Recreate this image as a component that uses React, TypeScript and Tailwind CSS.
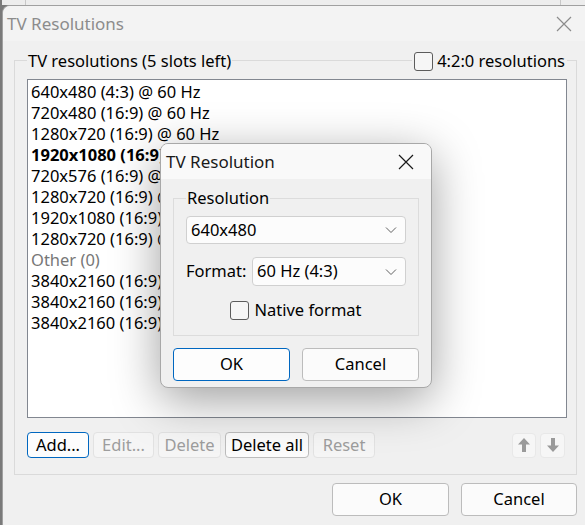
import React from 'react';

const font = { fontFamily: '"Noto Sans", "Open Sans", sans-serif' };

const items: { text: string; bold?: boolean; muted?: boolean }[] = [
    { text: '640x480 (4:3) @ 60 Hz' },
    { text: '720x480 (16:9) @ 60 Hz' },
    { text: '1280x720 (16:9) @ 60 Hz' },
    { text: '1920x1080 (16:9) @ 60 Hz', bold: true },
    { text: '720x576 (16:9) @ 50 Hz' },
    { text: '1280x720 (16:9) @ 50 Hz' },
    { text: '1920x1080 (16:9) @ 50 Hz' },
    { text: '1280x720 (16:9) @ 24 Hz' },
    { text: 'Other (0)', muted: true },
    { text: '3840x2160 (16:9) @ 60 Hz' },
    { text: '3840x2160 (16:9) @ 50 Hz' },
    { text: '3840x2160 (16:9) @ 30 Hz' },
];

const CloseIcon = ({ color }: { color: string }) => (
    <svg width="16" height="16" viewBox="0 0 16 16" fill="none" stroke={color} strokeWidth="1.2">
        <path d="M1 1 L15 15 M15 1 L1 15" />
    </svg>
);

const Chevron = () => (
    <svg width="12" height="8" viewBox="0 0 12 8" fill="none" stroke="#606060" strokeWidth="1">
        <path d="M1 1.5 L6 6.5 L11 1.5" />
    </svg>
);

const Arrow = ({ down }: { down?: boolean }) => (
    <svg width="12" height="14" viewBox="0 0 12 14" fill="#9a9a9a" className={down ? 'rotate-180' : ''}>
        <path d="M6 0 L12 6.5 L8 6.5 L8 14 L4 14 L4 6.5 L0 6.5 Z" />
    </svg>
);

const Checkbox = () => (
    <span className="inline-block w-[19px] h-[19px] rounded-[3px] border border-[#5c5c5c] bg-[#f6f6f6]" />
);

const Button = ({
    label,
    className = '',
    variant = 'normal',
}: {
    label: string;
    className?: string;
    variant?: 'normal' | 'default' | 'disabled';
}) => {
    const look =
        variant === 'default'
            ? 'border-[#0067c0] text-black bg-[#fdfdfd]'
            : variant === 'disabled'
              ? 'border-[#e2e2e2] text-[#9d9d9d] bg-[#f5f5f5]'
              : 'border-[#bcbcbc] text-black bg-[#fbfbfb]';
    return (
        <button className={`flex items-center justify-center rounded-[4px] border text-[16.5px] ${look} ${className}`}>
            {label}
        </button>
    );
};

const ResolutionDialog = () => (
    <div className="absolute left-[160px] top-[143px] w-[272px] h-[245px] rounded-[8px] border border-[#a8a8a8] bg-[#f0f0f0] overflow-hidden shadow-[0_12px_48px_rgba(0,0,0,0.38)]">
        <div className="h-[35px] bg-[#f9f9f9] flex items-center">
            <span className="pl-[5px] text-[17px] text-[#1a1a1a]">TV Resolution</span>
            <span className="ml-auto w-[46px] mr-[2px] flex justify-center">
                <CloseIcon color="#1a1a1a" />
            </span>
        </div>

        <div className="px-[12px] pt-[19px]">
            <div className="border border-[#dcdcdc] px-[12px] pb-[12px]">
                <div className="-mt-[12px] flex">
                    <span className="bg-[#f0f0f0] px-[1px] text-[16.5px] leading-[22px] text-black">Resolution</span>
                </div>
                <div className="mt-[7px] h-[28px] rounded-[4px] border border-[#d0d0d0] bg-[#fcfcfc] flex items-center pl-[4px] pr-[8px] text-[16.5px]">
                    <span>640x480</span>
                    <span className="ml-auto">
                        <Chevron />
                    </span>
                </div>
                <div className="mt-[13px] flex items-center">
                    <span className="text-[16.5px] w-[66px]">Format:</span>
                    <div className="flex-1 h-[29px] rounded-[4px] border border-[#d0d0d0] bg-[#fcfcfc] flex items-center pl-[4px] pr-[8px] text-[16.5px]">
                        <span>60 Hz (4:3)</span>
                        <span className="ml-auto">
                            <Chevron />
                        </span>
                    </div>
                </div>
                <div className="mt-[12px] flex items-center justify-center gap-[5px] text-[16.5px]">
                    <Checkbox />
                    <span>Native format</span>
                </div>
            </div>

            <div className="mt-[12px] flex gap-[12px]">
                <Button label="OK" variant="default" className="w-[117px] h-[33px]" />
                <Button label="Cancel" className="w-[117px] h-[33px]" />
            </div>
        </div>
    </div>
);

const App = () => {
    return (
        <div className="relative w-[585px] h-[525px] overflow-hidden bg-[#7a7a7a]" style={font}>
            {/* desktop strip above the window */}
            <div className="h-[5px] ml-[2px] bg-[#ededed] flex">
                <div className="ml-[23px] w-px bg-[#c8c8c8]" />
                <div className="ml-auto mr-[24px] w-px bg-[#c8c8c8]" />
            </div>

            <div className="ml-[2px] w-[590px] h-[530px] rounded-tl-[8px] bg-[#f0f0f0] border-l border-t border-[#a0a0a0] overflow-hidden">
                <div className="h-[35px] bg-[#f3f3f3] flex items-center">
                    <span className="pl-[4px] text-[17px] text-[#8c8c8c]">TV Resolutions</span>
                    <span className="ml-auto w-[40px] mr-[8px] flex justify-center">
                        <CloseIcon color="#8c8c8c" />
                    </span>
                </div>

                <div className="pl-[11px] w-[583px] pr-[9px]">
                    <div className="mt-[19px] h-[415px] border border-[#dadada] pl-[12px] pr-[9px] flex flex-col">
                        <div className="-mt-[11px] h-[22px] flex items-center">
                            <span className="bg-[#f0f0f0] px-[1px] text-[16.5px] text-black">TV resolutions (5 slots left)</span>
                            <span className="ml-auto bg-[#f0f0f0] pl-[2px] pr-[2px] flex items-center gap-[4px] text-[16.5px]">
                                <Checkbox />
                                4:2:0 resolutions
                            </span>
                        </div>

                        <div className="mt-[7px] h-[339px] bg-white border border-[#828790] pt-[1px] pl-[3px]">
                            {items.map((it, i) => (
                                <div
                                    key={i}
                                    className={`h-[21px] leading-[21px] text-[16.5px] whitespace-nowrap ${it.bold ? 'font-bold text-black' : it.muted ? 'text-[#777]' : 'text-black'}`}
                                >
                                    {it.text}
                                </div>
                            ))}
                        </div>

                        <div className="mt-[14px] flex items-center gap-[4px]">
                            <Button label="Add..." variant="default" className="w-[62px] h-[26px]" />
                            <Button label="Edit..." variant="disabled" className="w-[61px] h-[26px]" />
                            <Button label="Delete" variant="disabled" className="w-[63px] h-[26px]" />
                            <Button label="Delete all" className="w-[84px] h-[26px] bg-[#ececec]" />
                            <Button label="Reset" variant="disabled" className="w-[62px] h-[26px]" />
                            <div className="ml-auto flex gap-[4px] mr-[2px]">
                                <span className="w-[24px] h-[25px] rounded-[4px] border border-[#e8e8e8] bg-[#f6f6f6] flex items-center justify-center">
                                    <Arrow />
                                </span>
                                <span className="w-[25px] h-[25px] rounded-[4px] border border-[#e8e8e8] bg-[#f6f6f6] flex items-center justify-center">
                                    <Arrow down />
                                </span>
                            </div>
                        </div>
                    </div>

                    <div className="mt-[8px] flex justify-end gap-[12px]">
                        <Button label="OK" className="w-[117px] h-[33px]" />
                        <Button label="Cancel" className="w-[116px] h-[33px]" />
                    </div>
                </div>
            </div>

            <ResolutionDialog />
        </div>
    );
};

export default App;
